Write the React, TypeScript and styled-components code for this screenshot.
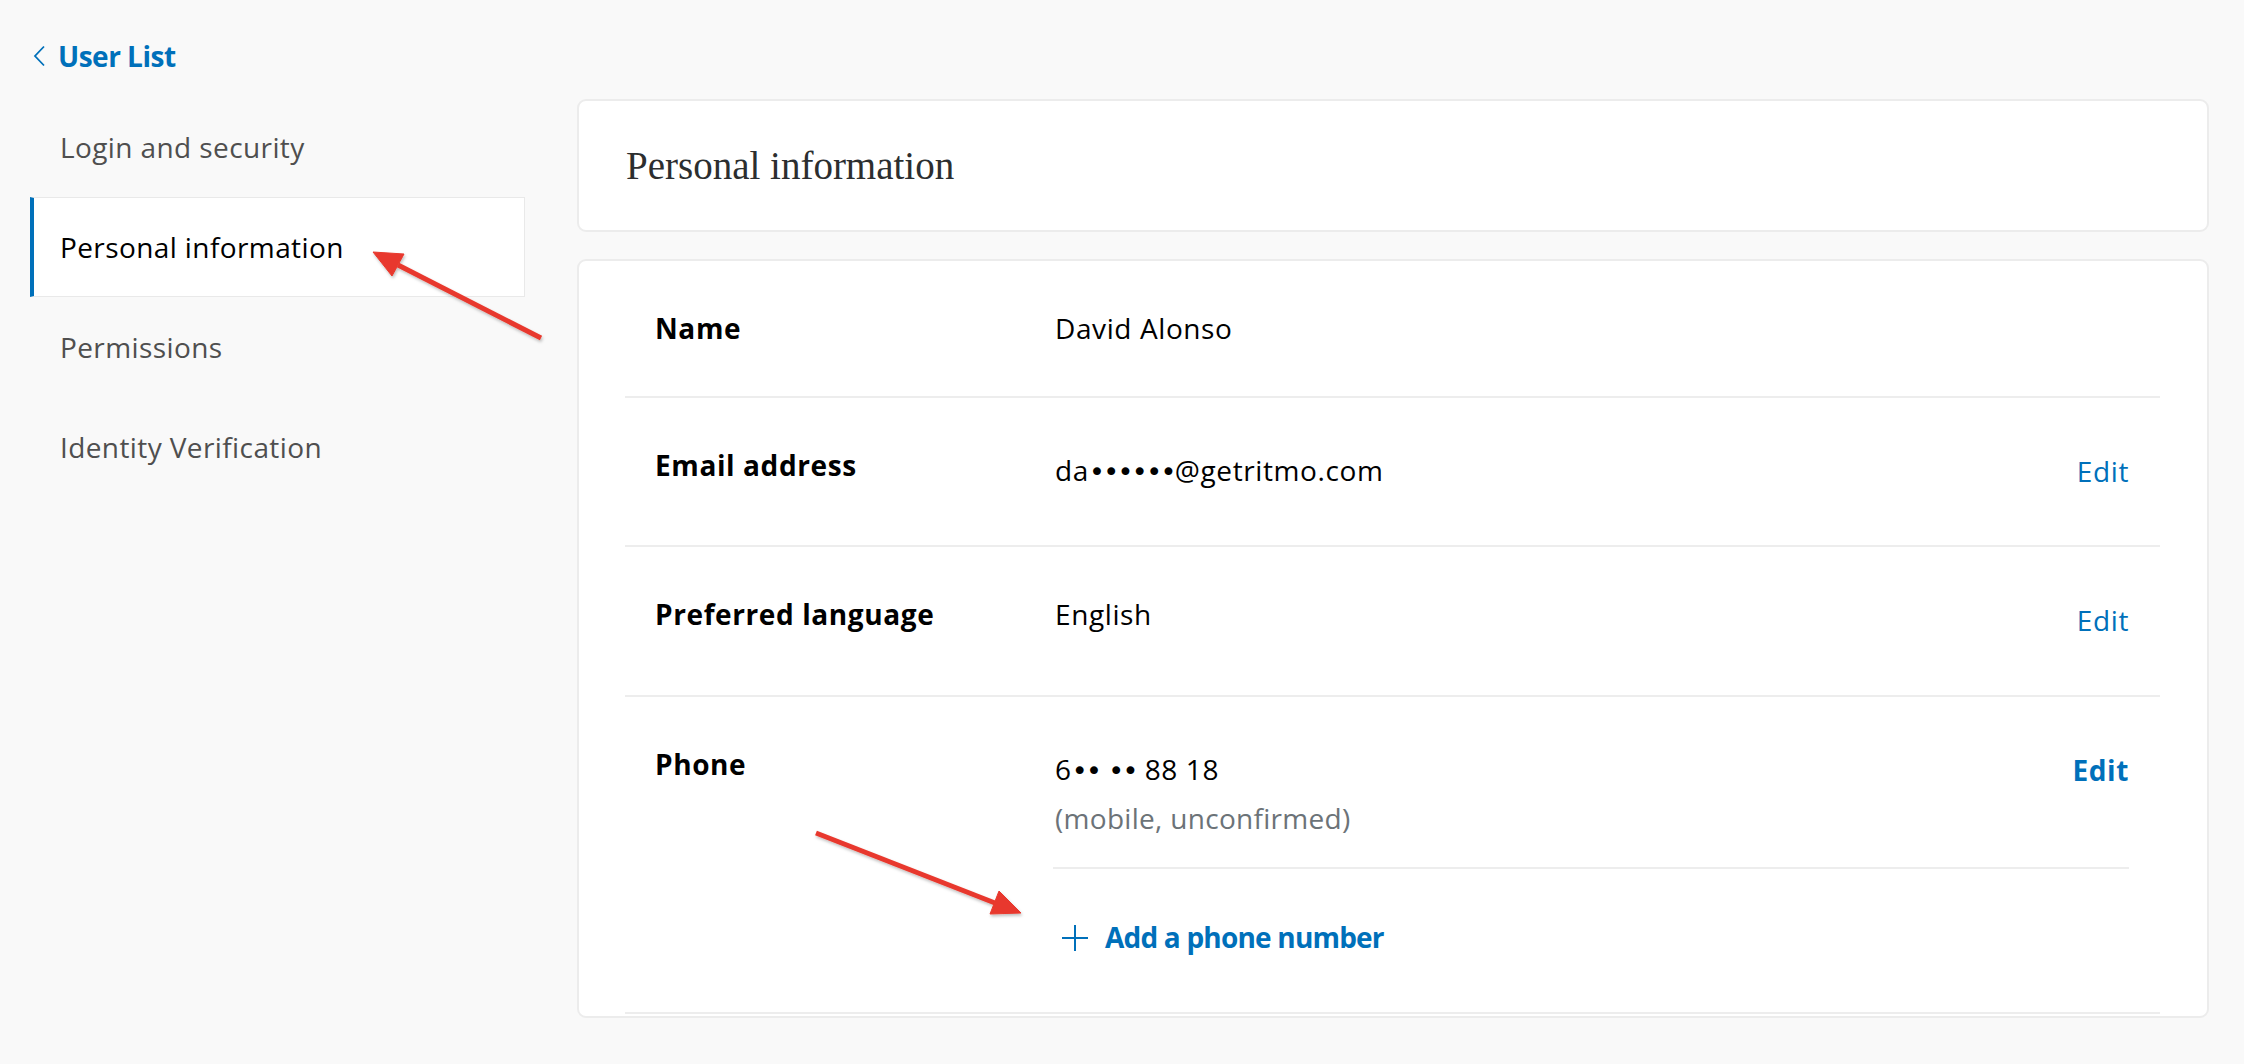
import styled, { createGlobalStyle } from "styled-components"

const GlobalStyle = createGlobalStyle`
  html, body {
    margin: 0;
    padding: 0;
    background: #f9f9f9;
  }
  body {
    font-family: 'Open Sans', 'Noto Sans', sans-serif;
    color: #000;
  }
`

const Page = styled.div`
  position: relative;
  min-height: 1064px;
  padding: 0 35px 0 30px;
  box-sizing: border-box;
`

const BackLink = styled.a`
  display: flex;
  align-items: center;
  gap: 12px;
  height: 97px;
  padding-left: 3px;
  padding-top: 15px;
  box-sizing: border-box;
  color: #0070ba;
  font-weight: 700;
  font-size: 28px;
  letter-spacing: -0.5px;
  text-decoration: none;
`

const Columns = styled.div`
  display: flex;
  align-items: flex-start;
  gap: 52px;
`

const Sidebar = styled.nav`
  width: 495px;
  flex-shrink: 0;
  display: flex;
  flex-direction: column;
`

const NavItem = styled.div<{ $active?: boolean }>`
  height: 100px;
  display: flex;
  align-items: center;
  box-sizing: border-box;
  padding-left: 26px;
  font-size: 28px;
  letter-spacing: 0.4px;
  color: ${p => (p.$active ? "#000" : "#4f4f4f")};
  background: ${p => (p.$active ? "#fff" : "transparent")};
  border: 1px solid ${p => (p.$active ? "#e9e9e9" : "transparent")};
  border-left: 4px solid ${p => (p.$active ? "#0070ba" : "transparent")};
`

const Main = styled.main`
  flex: 1;
  display: flex;
  flex-direction: column;
  gap: 27px;
  margin-top: 2px;
`

const Card = styled.section`
  background: #fff;
  border: 2px solid #ececec;
  border-radius: 9px;
  box-sizing: border-box;
`

const HeaderCard = styled(Card)`
  height: 133px;
  display: flex;
  align-items: center;
  padding-left: 47px;
`

const Title = styled.h1`
  margin: 0;
  font-family: 'Liberation Serif', 'Times New Roman', serif;
  font-weight: 400;
  font-size: 39px;
  color: #2c2e2f;
`

const InfoCard = styled(Card)`
  padding: 0 47px 2px 46px;
`

const Row = styled.div`
  display: grid;
  grid-template-columns: 400px 1fr;
  padding: 51px 31px 50px 30px;
  border-bottom: 2px solid #ededed;
  font-size: 28px;
  line-height: 1.2;
  letter-spacing: 0.6px;
`

const Label = styled.div`
  font-weight: 700;
  letter-spacing: 0.6px;
`

const Right = styled.div`
  display: flex;
  flex-direction: column;
`

const ValueLine = styled.div`
  display: flex;
  justify-content: space-between;
  align-items: flex-start;
`

const Value = styled.div<{ $drop?: boolean }>`
  padding-top: ${p => (p.$drop ? "5px" : "0")};
`

const Dots = styled.span`
  font-family: 'DejaVu Sans', sans-serif;
  font-size: 27px;
  letter-spacing: -1.6px;
`

const Sub = styled.div`
  color: #6c7378;
  margin-top: 15px;
  letter-spacing: 0.3px;
`

const EditLink = styled.a<{ $bold?: boolean }>`
  color: #0070ba;
  font-weight: ${p => (p.$bold ? 700 : 400)};
  padding: 6px 0 7px;
  text-decoration: none;
`

const SubDivider = styled.div`
  height: 2px;
  background: #ededed;
  margin: 31px 0 0 -2px;
`

const AddLink = styled.a`
  display: flex;
  align-items: center;
  gap: 17px;
  margin: 52px 0 8px 7px;
  color: #0070ba;
  font-weight: 700;
  letter-spacing: -0.8px;
  text-decoration: none;
`

const Overlay = styled.svg`
  position: absolute;
  left: 0;
  top: 0;
  width: 2244px;
  height: 1064px;
  pointer-events: none;
`

const Chevron = () => (
  <svg width="13" height="22" viewBox="0 0 13 22" fill="none">
    <path d="M11 1.5 L2 11 L11 20.5" stroke="#0070ba" strokeWidth="1.8" />
  </svg>
)

const Plus = () => (
  <svg width="26" height="26" viewBox="0 0 26 26" fill="none">
    <path d="M13 0 V26 M0 13 H26" stroke="#0070ba" strokeWidth="2" />
  </svg>
)

const App = () => {
  return (
    <>
      <GlobalStyle />
      <Page>
        <BackLink href="#">
          <Chevron />
          User List
        </BackLink>
        <Columns>
          <Sidebar>
            <NavItem>Login and security</NavItem>
            <NavItem $active>Personal information</NavItem>
            <NavItem>Permissions</NavItem>
            <NavItem>Identity Verification</NavItem>
          </Sidebar>
          <Main>
            <HeaderCard>
              <Title>Personal information</Title>
            </HeaderCard>
            <InfoCard>
              <Row>
                <Label>Name</Label>
                <Value>David Alonso</Value>
              </Row>
              <Row>
                <Label>Email address</Label>
                <ValueLine>
                  <Value $drop>da<Dots>••••••</Dots>@getritmo.com</Value>
                  <EditLink href="#">Edit</EditLink>
                </ValueLine>
              </Row>
              <Row>
                <Label>Preferred language</Label>
                <ValueLine>
                  <Value>English</Value>
                  <EditLink href="#">Edit</EditLink>
                </ValueLine>
              </Row>
              <Row>
                <Label>Phone</Label>
                <Right>
                  <ValueLine>
                    <div>
                      <Value $drop>6<Dots>••</Dots> <Dots>••</Dots> 88 18</Value>
                      <Sub>(mobile, unconfirmed)</Sub>
                    </div>
                    <EditLink href="#" $bold>Edit</EditLink>
                  </ValueLine>
                  <SubDivider />
                  <AddLink href="#">
                    <Plus />
                    Add a phone number
                  </AddLink>
                </Right>
              </Row>
            </InfoCard>
          </Main>
        </Columns>
        <Overlay viewBox="0 0 2244 1064">
          <defs>
            <filter id="shadow" x="-10%" y="-10%" width="120%" height="120%">
              <feDropShadow dx="1" dy="2" stdDeviation="1.5" floodColor="#000" floodOpacity="0.25" />
            </filter>
          </defs>
          <g filter="url(#shadow)" fill="#e8392d" stroke="#e8392d">
            <line x1="541" y1="338" x2="398" y2="265" strokeWidth="5" />
            <polygon points="373,252 404,254 392,276" strokeWidth="1" />
            <line x1="816" y1="833" x2="995" y2="903" strokeWidth="5" />
            <polygon points="1021,913 990,914 999,891" strokeWidth="1" />
          </g>
        </Overlay>
      </Page>
    </>
  )
}

export default App
